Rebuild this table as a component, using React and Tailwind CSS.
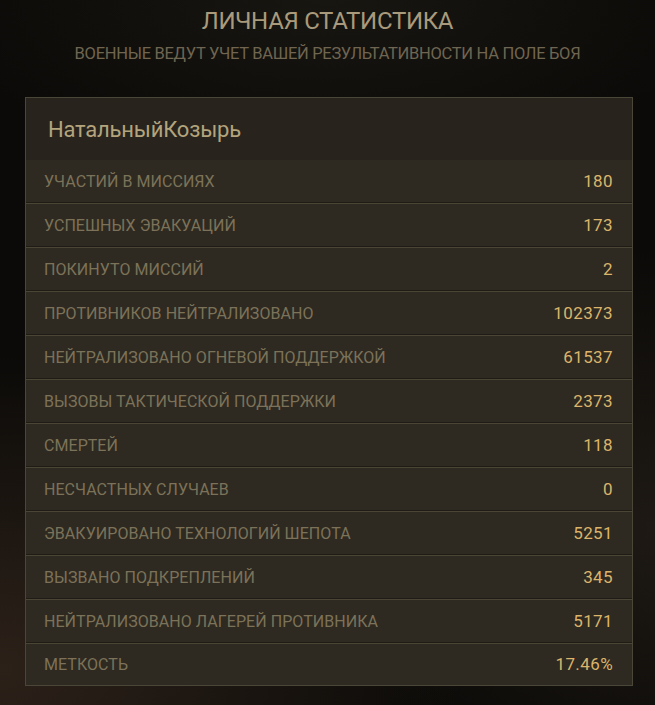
import React from 'react';

const stats = [
  { label: 'Участий в миссиях', value: '180' },
  { label: 'Успешных эвакуаций', value: '173' },
  { label: 'Покинуто миссий', value: '2' },
  { label: 'Противников нейтрализовано', value: '102373' },
  { label: 'Нейтрализовано огневой поддержкой', value: '61537' },
  { label: 'Вызовы тактической поддержки', value: '2373' },
  { label: 'Смертей', value: '118' },
  { label: 'Несчастных случаев', value: '0' },
  { label: 'Эвакуировано технологий шепота', value: '5251' },
  { label: 'Вызвано подкреплений', value: '345' },
  { label: 'Нейтрализовано лагерей противника', value: '5171' },
  { label: 'Меткость', value: '17.46%' },
];

const App = () => {
  return (
    <div className="w-[655px] h-[705px] overflow-hidden bg-[#0b0a08] bg-[radial-gradient(ellipse_70%_45%_at_0%_95%,#2c2119_0%,transparent_100%),radial-gradient(ellipse_50%_40%_at_100%_75%,#1e1914_0%,transparent_100%),radial-gradient(ellipse_60%_25%_at_50%_0%,#181611_0%,transparent_100%)] font-['Roboto',sans-serif]">
      <div className="flex flex-col items-center pt-[7px]">
        <h1 className="text-[24px] leading-[28px] text-[#a99a7c] uppercase tracking-[-0.3px] font-normal">
          Личная статистика
        </h1>
        <p className="mt-[10px] text-[16.5px] leading-[18px] text-[#6f6551] uppercase tracking-[-0.3px]">
          Военные ведут учет вашей результативности на поле боя
        </p>
      </div>

      <div className="ml-[25px] mt-[34px] w-[608px] border border-[#4a4638] bg-[#2e2a21]">
        <div className="h-[62px] bg-[#28241d] flex items-center pl-[22px]">
          <span className="text-[22px] text-[#b3a47e] tracking-[-0.2px]">НатальныйКозырь</span>
        </div>
        {stats.map((s, i) => (
          <div
            key={s.label}
            className={
              'flex items-center justify-between pl-[18px] pr-[19px] ' +
              (i < stats.length - 1
                ? 'h-[44px] border-b border-b-[#4a4535] shadow-[inset_0_-1px_0_#1f1c16]'
                : 'h-[41px]')
            }
          >
            <span className="text-[16px] uppercase text-[#7c7259] tracking-[0.05px]">{s.label}</span>
            <span className="text-[17px] text-[#dcb46a] tracking-[0.4px]">{s.value}</span>
          </div>
        ))}
      </div>
    </div>
  );
};

export default App;
